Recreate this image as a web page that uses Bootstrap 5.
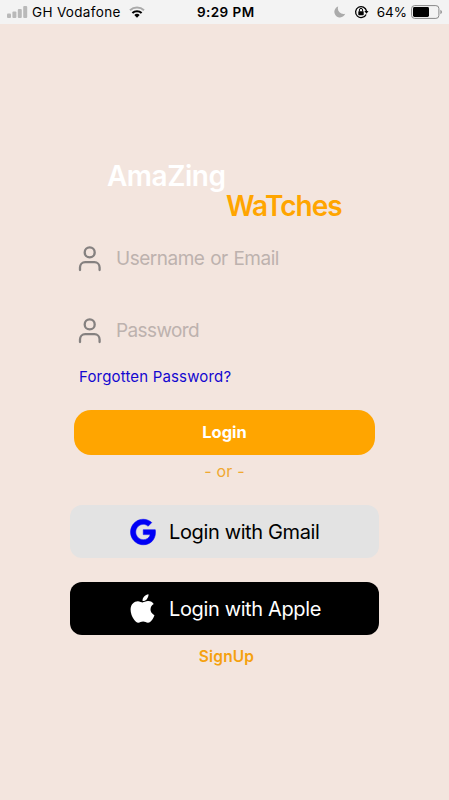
<!DOCTYPE html>
<html lang="en">
<head>
<meta charset="utf-8">
<meta name="viewport" content="width=device-width, initial-scale=1">
<title>AmaZing WaTches</title>
<link href="https://cdn.jsdelivr.net/npm/bootstrap@5.3.0/dist/css/bootstrap.min.css" rel="stylesheet">
<style>
body{background:#f3e5de;font-family:Inter,"Liberation Sans",sans-serif;color:#000;height:800px;overflow:hidden}
.status{height:24px;background:#f3f3f3;font-size:13.5px;line-height:24px;padding:0 6px 0 7px}
.side{flex:1 1 0}
.status svg,.field svg,.social svg{display:block;flex:none}
.carrier{margin-left:4px;letter-spacing:.33px;white-space:nowrap}
.clock{letter-spacing:.45px;white-space:nowrap;padding-left:1.5px}
.brand{padding:137px 0 0 107px;font-size:28px;font-weight:600;line-height:30px;white-space:nowrap}
.brand-a{color:#fff;letter-spacing:-.5px}
.brand-b{color:#ffa500;margin-left:119px;letter-spacing:-1.05px}
.field{height:72px;padding-left:76px}
.field:first-of-type{margin-top:2px}
.field input{border:0;background:transparent;padding:0;margin-left:12px;font-size:19px;letter-spacing:-.48px;word-spacing:.8px;width:240px;outline:0}
.field input::placeholder{color:#bdb2ae;opacity:1}
.field input[type=password]{letter-spacing:-.6px}
.forgot{margin-left:79px;font-size:15px;letter-spacing:.17px;line-height:20px;color:#1408d0;text-decoration:none}
.login{width:301px;height:45px;margin:23px 0 0 74px;border:0;border-radius:17px;background:#ffa500!important;color:#fff!important;font-size:16.5px;font-weight:700;padding:0}
.or{font-size:16px;letter-spacing:.2px;line-height:20px;color:#f0a830;margin-top:6px}
.social{width:308.5px;height:53px;margin-left:70px;border-radius:12px;border:0;font-size:20px;letter-spacing:-.37px;padding:0 0 0 55px}
.social span{margin-left:9px;white-space:nowrap}
.gm{background:#e3e3e3!important;color:#000!important;margin-top:24px}
.gm svg{margin:0 .5px}
.ap{background:#000!important;color:#fff!important;margin-top:24px}
.signup{color:#f5a10f;font-size:15.5px;letter-spacing:.15px;font-weight:600;line-height:20px;margin-top:12px;text-decoration:none;padding-left:4px}
</style>
<script src="https://cdn.jsdelivr.net/npm/bootstrap@5.3.0/dist/js/bootstrap.bundle.min.js"></script>
</head>
<body class="d-flex flex-column">
<header class="status d-flex align-items-center">
  <div class="side d-flex align-items-center">
  <svg width="21" height="14" viewBox="0 0 21 14" fill="#b9b9b9"><rect x="0" y="8.5" width="4" height="4.5" rx="1"/><rect x="5.4" y="6.5" width="4" height="6.5" rx="1"/><rect x="10.8" y="4" width="4" height="9" rx="1"/><rect x="16.2" y="1" width="4" height="12" rx="1"/></svg>
  <span class="carrier">GH Vodafone</span>
  <svg class="ms-2" width="16" height="12" viewBox="0 0 16 12" fill="none"><path d="M1 4.3a10.3 10.3 0 0 1 14 0" stroke="#aaa" stroke-width="2"/><path d="M3.4 7a6.9 6.9 0 0 1 9.2 0" stroke="#000" stroke-width="2.2"/><path d="M8 11.8 5.3 9.1a4 4 0 0 1 5.4 0z" fill="#000"/></svg>
  </div>
  <strong class="clock fw-semibold">9:29 PM</strong>
  <div class="side d-flex align-items-center justify-content-end">
  <svg width="12" height="12" viewBox="0 0 12 12"><path d="M4.2.5a5.6 5.6 0 1 0 7 7.3A5.7 5.7 0 0 1 4.2.5z" fill="#aaa"/></svg>
  <svg class="ms-2" width="15" height="14" viewBox="0 0 15 14"><path d="M12.1 9.4A5.5 5.5 0 1 1 12.5 6" fill="none" stroke="#000" stroke-width="1.3"/><path d="M10.3 6h4.2l-2 2.8z"/><rect x="4.3" y="6.2" width="5.4" height="4" rx=".6"/><path d="M5.4 6.5V5a1.6 1.6 0 0 1 3.2 0v1.5" fill="none" stroke="#000"/></svg>
  <span class="ms-2">64%</span>
  <svg class="ms-1" width="32" height="14" viewBox="0 0 32 14"><rect x=".6" y=".6" width="27.3" height="12.8" rx="3" fill="none" stroke="#888"/><rect x="2" y="2" width="16" height="10" rx="1.4"/><path d="M29.3 4.7q1.8.7 1.8 2.3t-1.8 2.3z" fill="#999"/></svg>
  </div>
</header>
<main class="d-flex flex-column align-items-start">
  <h1 class="brand m-0"><div class="brand-a">AmaZing</div><div class="brand-b">WaTches</div></h1>
  <label class="field d-flex align-items-center">
    <svg width="28" height="28" viewBox="0 0 28 28" fill="none" stroke="#858180" stroke-width="2.3" stroke-linecap="round"><circle cx="13.7" cy="7.4" r="5"/><path d="M4 25v-2.4c0-3.2 2.2-5.4 5.2-5.4h9.2c3 0 5.2 2.2 5.2 5.4V25"/></svg>
    <input type="text" placeholder="Username or Email" aria-label="Username or Email">
  </label>
  <label class="field d-flex align-items-center">
    <svg width="28" height="28" viewBox="0 0 28 28" fill="none" stroke="#858180" stroke-width="2.3" stroke-linecap="round"><circle cx="13.7" cy="7.4" r="5"/><path d="M4 25v-2.4c0-3.2 2.2-5.4 5.2-5.4h9.2c3 0 5.2 2.2 5.2 5.4V25"/></svg>
    <input type="password" placeholder="Password" aria-label="Password">
  </label>
  <a class="forgot" href="#">Forgotten Password?</a>
  <button class="btn login">Login</button>
  <div class="or w-100 text-center">- or -</div>
  <button class="btn social gm d-flex align-items-center">
    <svg width="34" height="34" viewBox="0 0 1024 1024" fill="#0000f5"><path d="M881 442.4H519.7v148.5h206.4c-8.9 48-35.9 88.6-76.6 115.8-34.4 23-78.3 36.6-129.9 36.6-99.9 0-184.4-67.5-214.6-158.2-7.6-23-12-47.6-12-72.9s4.4-49.9 12-72.9c30.3-90.6 114.8-158.1 214.7-158.1 56.3 0 106.8 19.4 146.6 57.4l110-110.1c-66.5-62-153.2-100-256.6-100-149.9 0-279.6 86-342.7 211.4-26 51.8-40.8 110.4-40.8 172.4S151 632.8 177 684.6C240.1 810 369.8 896 519.7 896c103.6 0 190.4-34.4 253.8-93 72.5-66.8 114.4-165.2 114.4-282.1 0-27.2-2.4-53.3-6.9-78.5z" stroke="#0000f5" stroke-width="16" stroke-linejoin="round"/></svg>
    <span>Login with Gmail</span>
  </button>
  <button class="btn social ap d-flex align-items-center">
    <svg width="35" height="35" viewBox="0 0 1024 1024" fill="#fff"><path d="M747.4 535.7c-.4-68.2 30.5-119.6 92.9-157.5-34.9-50-87.7-77.5-157.3-82.8-65.9-5.2-138 38.4-164.4 38.4-27.9 0-91.7-36.6-141.9-36.6C273.1 298.8 163 379.8 163 544.6c0 48.7 8.9 99 26.7 150.8 23.8 68.2 109.6 235.3 199.1 232.6 46.8-1.1 79.9-33.2 140.8-33.2 59.1 0 89.7 33.2 141.9 33.2 90.3-1.3 167.9-153.2 190.5-221.6-121.1-57.1-114.6-167.2-114.6-170.7zM642.3 230.7c50.7-60.2 46.1-115 44.6-134.7-44.8 2.6-96.6 30.5-126.1 64.8-32.5 36.8-51.6 82.3-47.5 133.6 52.4 4 100.2-22.9 129-63.7z"/></svg>
    <span>Login with Apple</span>
  </button>
  <a class="signup w-100 text-center" href="#">SignUp</a>
</main>
</body>
</html>
